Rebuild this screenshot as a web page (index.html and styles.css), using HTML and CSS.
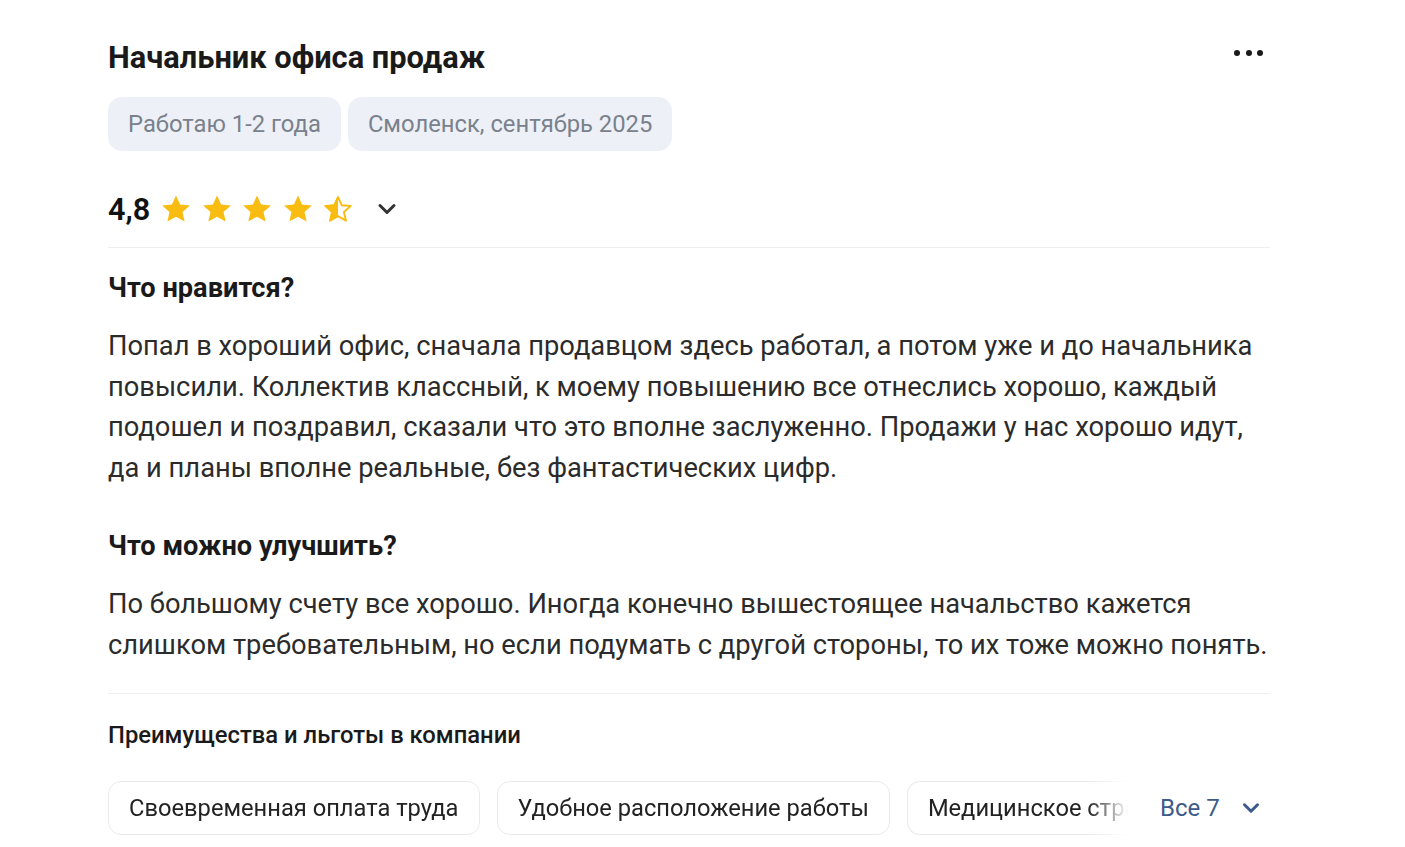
FILE: index.html
```html
<!DOCTYPE html>
<html lang="ru">
<head>
<meta charset="utf-8">
<title>Отзыв</title>
<link rel="stylesheet" href="styles.css">
</head>
<body>
<div class="review">
  <div class="head">
    <h1 class="title">Начальник офиса продаж</h1>
    <button class="more" aria-label="Ещё"><span></span><span></span><span></span></button>
  </div>
  <div class="tags">
    <span class="tag">Работаю 1-2 года</span>
    <span class="tag">Смоленск, сентябрь 2025</span>
  </div>
  <div class="rating">
    <span class="score">4,8</span>
    <div class="stars">
      <svg class="star" viewBox="0 0 24 24"><path d="M12 2.5l2.9 6.3 6.9.7-5.2 4.6 1.5 6.8L12 17.4l-6.1 3.5 1.5-6.8-5.2-4.6 6.9-.7z" fill="#f9bd12"/></svg>
      <svg class="star" viewBox="0 0 24 24"><path d="M12 2.5l2.9 6.3 6.9.7-5.2 4.6 1.5 6.8L12 17.4l-6.1 3.5 1.5-6.8-5.2-4.6 6.9-.7z" fill="#f9bd12"/></svg>
      <svg class="star" viewBox="0 0 24 24"><path d="M12 2.5l2.9 6.3 6.9.7-5.2 4.6 1.5 6.8L12 17.4l-6.1 3.5 1.5-6.8-5.2-4.6 6.9-.7z" fill="#f9bd12"/></svg>
      <svg class="star" viewBox="0 0 24 24"><path d="M12 2.5l2.9 6.3 6.9.7-5.2 4.6 1.5 6.8L12 17.4l-6.1 3.5 1.5-6.8-5.2-4.6 6.9-.7z" fill="#f9bd12"/></svg>
      <svg class="star" viewBox="0 0 24 24"><path d="M12 3.6l2.6 5.7 6.3.6-4.7 4.2 1.4 6.2L12 17.1l-5.6 3.2 1.4-6.2-4.7-4.2 6.3-.6z" fill="none" stroke="#f9bd12" stroke-width="1.4" stroke-linejoin="round"/><path d="M12 2.5v14.9l-6.1 3.5 1.5-6.8-5.2-4.6 6.9-.7z" fill="#f9bd12"/></svg>
    </div>
    <svg class="chev" viewBox="0 0 24 24"><path d="M6 9l6 6 6-6" fill="none" stroke="#333" stroke-width="2.6" stroke-linecap="round" stroke-linejoin="round"/></svg>
  </div>
  <div class="divider"></div>
  <section class="block">
    <h2 class="q">Что нравится?</h2>
    <p class="text">Попал в хороший офис, сначала продавцом здесь работал, а потом уже и до начальника повысили. Коллектив классный, к моему повышению все отнеслись хорошо, каждый подошел и поздравил, сказали что это вполне заслуженно. Продажи у нас хорошо идут, да и планы вполне реальные, без фантастических цифр.</p>
  </section>
  <section class="block">
    <h2 class="q">Что можно улучшить?</h2>
    <p class="text">По большому счету все хорошо. Иногда конечно вышестоящее начальство кажется слишком требовательным, но если подумать с другой стороны, то их тоже можно понять.</p>
  </section>
  <div class="divider"></div>
  <h3 class="perks-title">Преимущества и льготы в компании</h3>
  <div class="perks">
    <div class="chips">
      <span class="chip">Своевременная оплата труда</span>
      <span class="chip">Удобное расположение работы</span>
      <span class="chip chip-cut"><span class="chip-text">Медицинское страхование</span></span>
    </div>
    <div class="all">
      <span>Все 7</span>
      <svg class="chev-blue" viewBox="0 0 24 24"><path d="M6 9l6 6 6-6" fill="none" stroke="#3d5a8c" stroke-width="2.8" stroke-linecap="round" stroke-linejoin="round"/></svg>
    </div>
  </div>
</div>
</body>
</html>
```
FILE: styles.css
```css
* { box-sizing: border-box; }
body {
  margin: 0;
  background: #fff;
  font-family: Roboto, "Liberation Sans", Arial, sans-serif;
  color: #1f1f1f;
}
.review {
  width: 1166px;
  margin-left: 108px;
  padding-top: 36px;
}
.head {
  display: flex;
  align-items: center;
  justify-content: space-between;
  height: 42px;
}
.title {
  margin: 0;
  font-size: 30.8px;
  font-weight: 700;
  color: #1a1a1a;
}
.more {
  border: 0;
  background: none;
  padding: 0;
  margin-right: 11px;
  display: flex;
  gap: 5.5px;
  margin-top: -8px;
}
.more span {
  width: 6px;
  height: 6px;
  border-radius: 50%;
  background: #1a1a1a;
}
.tags {
  display: flex;
  gap: 7px;
  margin-top: 19px;
}
.tag {
  height: 54px;
  padding: 0 20px;
  display: flex;
  align-items: center;
  background: #edf1f7;
  border-radius: 14px;
  font-size: 23.8px;
  color: #7a818c;
}
.rating {
  display: flex;
  align-items: center;
  margin-top: 40px;
  height: 36px;
}
.score {
  font-size: 30.6px;
  font-weight: 600;
  color: #111;
  margin-right: 9px;
}
.stars {
  display: flex;
  gap: 6.5px;
}
.star {
  width: 34px;
  height: 34px;
}
.chev {
  width: 28px;
  height: 28px;
  margin-left: 18px;
}
.divider {
  height: 1px;
  background: #eceef1;
  margin-top: 20px;
  margin-right: 4px;
}
.block {
  margin-top: 24px;
}
.block + .block {
  margin-top: 42px;
}
.q {
  margin: 0;
  font-size: 27.2px;
  font-weight: 700;
  color: #1a1a1a;
  line-height: 32px;
}
.text {
  margin: 22px 0 0;
  font-size: 27.3px;
  line-height: 40.5px;
  color: #2b2b2b;
}
.block + .block + .divider {
  margin-top: 28px;
}
.perks-title {
  margin: 25px 0 0;
  font-size: 23.8px;
  font-weight: 500;
  color: #1a1a1a;
  line-height: 32px;
}
.perks {
  display: flex;
  align-items: center;
  margin-top: 30px;
}
.chips {
  display: flex;
  gap: 17px;
  width: 1020px;
  overflow: hidden;
  -webkit-mask-image: linear-gradient(to right, #000 0, #000 980px, transparent 1020px);
  mask-image: linear-gradient(to right, #000 0, #000 980px, transparent 1020px);
}
.chip {
  flex: none;
  height: 54px;
  padding: 0 20px;
  display: flex;
  align-items: center;
  border: 1px solid #e8eaee;
  border-radius: 13px;
  font-size: 23.7px;
  color: #222;
  white-space: nowrap;
}
.chip-cut {
  flex: 1 1 auto;
  min-width: 0;
  padding-right: 0;
  border-right: 0;
  border-top-right-radius: 0;
  border-bottom-right-radius: 0;
  overflow: hidden;
}
.chip-text {
  overflow: hidden;
  white-space: nowrap;
}
.all {
  display: flex;
  align-items: center;
  gap: 18px;
  margin-left: 32px;
  font-size: 24px;
  color: #3d5a8c;
}
.chev-blue {
  width: 26px;
  height: 26px;
}
```
